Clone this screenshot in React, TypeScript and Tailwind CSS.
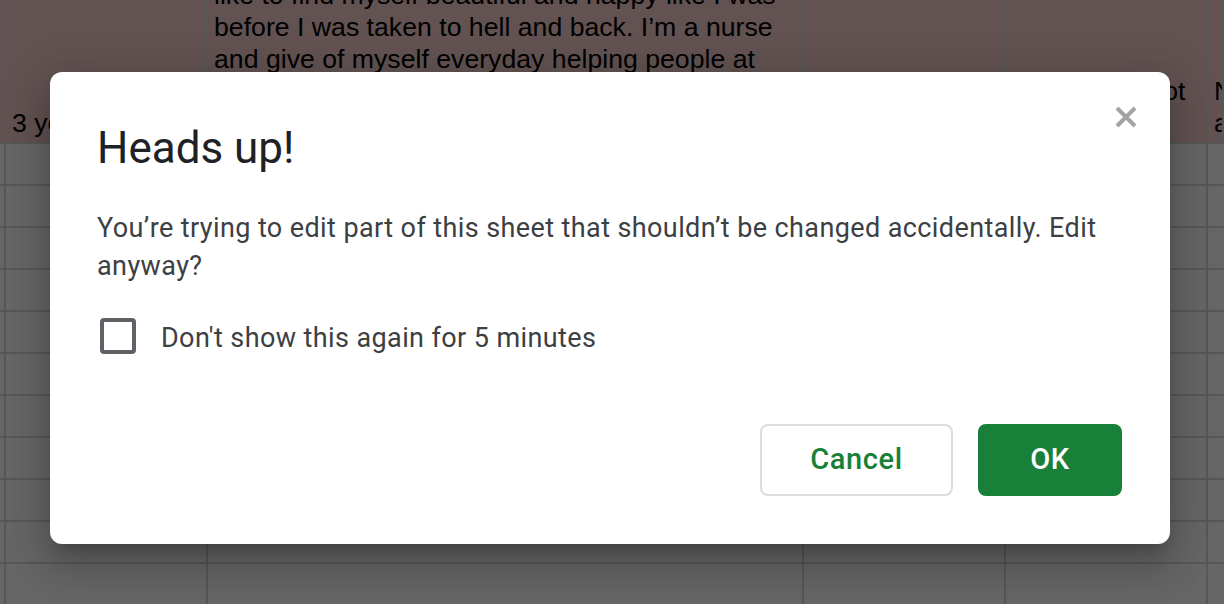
import React from "react";

const cellFont = { fontFamily: '"Liberation Sans", Arial, sans-serif' };

function HeaderCell({ w, lines, grow, pl }: { w?: string; lines: string[]; grow?: boolean; pl?: string }) {
  return (
    <div
      className={`${grow ? "flex-1" : ""} ${w ?? ""} ${pl ?? "pl-[6px]"} shrink-0 h-full border-r-2 border-[#d9d9d9] overflow-hidden flex flex-col justify-end pr-[6px] pb-[3px] text-[26.67px] leading-[32px] text-black whitespace-nowrap`}
      style={cellFont}
    >
      {lines.map((l, i) => (
        <div key={i}>{l}</div>
      ))}
    </div>
  );
}

function Row() {
  return (
    <div className="flex h-[42px] border-b-2 border-[#d9d9d9] bg-white">
      <div className="w-[6px] shrink-0 border-r-2 border-[#d9d9d9]" />
      <div className="w-[202px] shrink-0 border-r-2 border-[#d9d9d9]" />
      <div className="w-[596px] shrink-0 border-r-2 border-[#d9d9d9]" />
      <div className="w-[202px] shrink-0 border-r-2 border-[#d9d9d9]" />
      <div className="w-[202px] shrink-0 border-r-2 border-[#d9d9d9]" />
      <div className="flex-1" />
    </div>
  );
}

export default function App() {
  return (
    <div className="relative w-[1224px] h-[604px] overflow-hidden bg-white">
      {/* spreadsheet */}
      <div className="flex flex-col">
        <div className="flex h-[144px] border-b-2 border-[#d9d9d9] bg-[#f4cccc]">
          <div className="w-[6px] shrink-0 border-r-2 border-[#d9d9d9]" />
          <HeaderCell w="w-[202px]" lines={["3 years"]} />
          <HeaderCell
            w="w-[596px]"
            lines={[
              "like to find myself beautiful and happy like I was",
              "before I was taken to hell and back. I\u2019m a nurse",
              "and give of myself everyday helping people at",
              "work and at home, and I just want to feel like",
              "myself again.",
            ]}
          />
          <HeaderCell w="w-[202px]" lines={["Yes"]} />
          <HeaderCell w="w-[202px]" pl="pl-[12px]" lines={["Absolutely not", "yet"]} />
          <HeaderCell grow lines={["No", "and"]} />
        </div>
        {Array.from({ length: 11 }).map((_, i) => (
          <Row key={i} />
        ))}
      </div>

      {/* overlay */}
      <div className="absolute inset-0 bg-[rgba(0,0,0,0.6)]" />

      {/* dialog */}
      <div
        className="absolute left-[50px] top-[72px] w-[1120px] h-[472px] rounded-[12px] bg-white shadow-[0_24px_38px_3px_rgba(0,0,0,0.14),0_9px_46px_8px_rgba(0,0,0,0.12),0_11px_15px_-7px_rgba(0,0,0,0.2)] flex flex-col px-[47px]"
        style={{ fontFamily: 'Roboto, "Noto Sans", sans-serif' }}
      >
        <button className="absolute right-[33px] top-[34px] w-[22px] h-[22px] flex items-center justify-center">
          <svg width="22" height="22" viewBox="0 0 22 22">
            <path d="M2 2 L20 20 M20 2 L2 20" stroke="#a3a3a3" strokeWidth="4" strokeLinecap="butt" />
          </svg>
        </button>

        <h1 className="mt-[50px] text-[44px] leading-[52px] text-[#202124] font-normal">Heads up!</h1>

        <p className="mt-[35px] text-[27px] leading-[38px] tracking-[0.4px] text-[#3c4043]">
          You’re trying to edit part of this sheet that shouldn’t be changed accidentally. Edit anyway?
        </p>

        <label className="mt-[33px] flex items-center h-[36px] ml-[3px]">
          <span className="w-[36px] h-[36px] rounded-[4px] border-[4px] border-[#5f6368] bg-white shrink-0" />
          <span className="ml-[25px] pt-[3px] text-[27px] leading-[38px] tracking-[0.4px] text-[#3c4043]">
            Don't show this again for 5 minutes
          </span>
        </label>

        <div className="mt-[70px] flex justify-end gap-[25px] pr-[1px]">
          <button className="w-[193px] h-[72px] rounded-[8px] border-2 border-[#dadce0] bg-white text-[#188038] text-[29px] tracking-[0.6px] font-medium">
            Cancel
          </button>
          <button className="w-[144px] h-[72px] rounded-[8px] bg-[#188038] text-white text-[29px] tracking-[0.6px] font-medium">
            OK
          </button>
        </div>
      </div>
    </div>
  );
}
